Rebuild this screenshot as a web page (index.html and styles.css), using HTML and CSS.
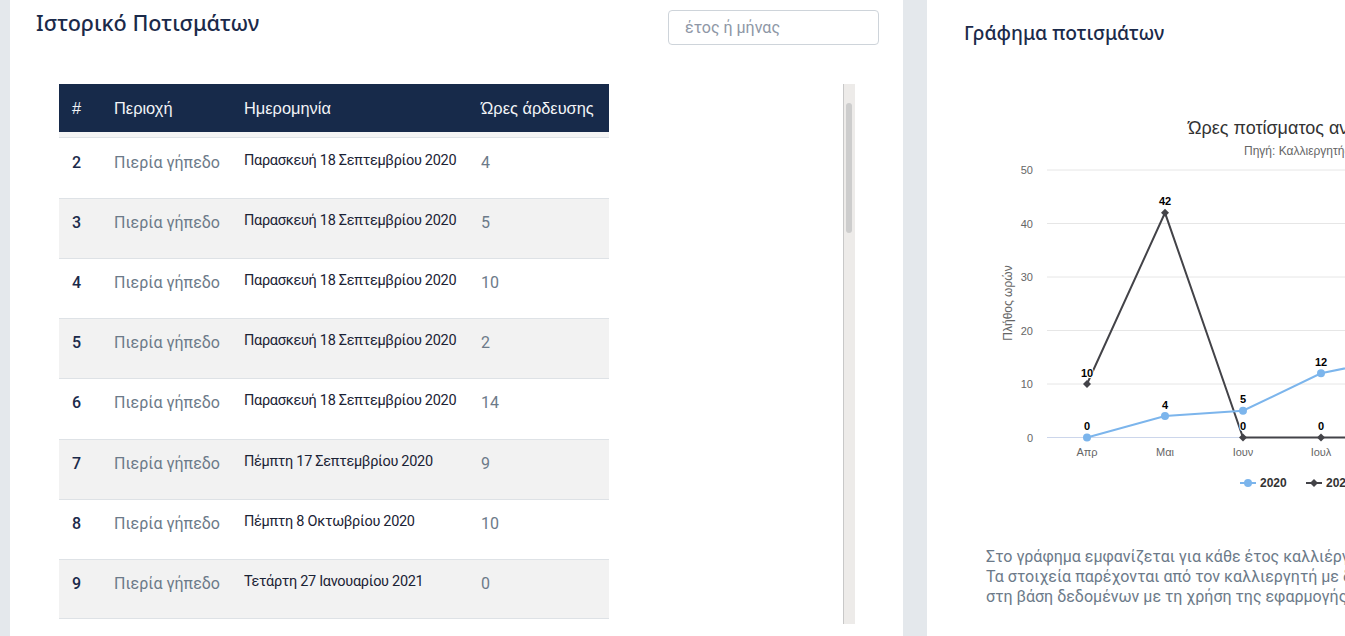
FILE: index.html
```html
<!DOCTYPE html>
<html lang="el">
<head>
    <meta charset="UTF-8">
    <title>Ποτίσματα</title>
    <link rel="stylesheet" href="styles.css">
</head>
<body>
    <div class="page">
        <section class="card card-history">
            <div class="card-head">
                <h2 class="card-title">Ιστορικό Ποτισμάτων</h2>
                <input type="text" class="search" placeholder="έτος ή μήνας">
            </div>
            <div class="table-wrap">
                <div class="table-area">
                    <table class="history">
                        <thead>
                            <tr>
                                <th class="col-num">#</th>
                                <th class="col-area">Περιοχή</th>
                                <th class="col-date">Ημερομηνία</th>
                                <th class="col-hours">Ώρες άρδευσης</th>
                            </tr>
                        </thead>
                        <tbody>
                            <tr>
                                <td class="num">2</td>
                                <td>Πιερία γήπεδο</td>
                                <td class="date">Παρασκευή 18 Σεπτεμβρίου 2020</td>
                                <td>4</td>
                            </tr>
                            <tr>
                                <td class="num">3</td>
                                <td>Πιερία γήπεδο</td>
                                <td class="date">Παρασκευή 18 Σεπτεμβρίου 2020</td>
                                <td>5</td>
                            </tr>
                            <tr>
                                <td class="num">4</td>
                                <td>Πιερία γήπεδο</td>
                                <td class="date">Παρασκευή 18 Σεπτεμβρίου 2020</td>
                                <td>10</td>
                            </tr>
                            <tr>
                                <td class="num">5</td>
                                <td>Πιερία γήπεδο</td>
                                <td class="date">Παρασκευή 18 Σεπτεμβρίου 2020</td>
                                <td>2</td>
                            </tr>
                            <tr>
                                <td class="num">6</td>
                                <td>Πιερία γήπεδο</td>
                                <td class="date">Παρασκευή 18 Σεπτεμβρίου 2020</td>
                                <td>14</td>
                            </tr>
                            <tr>
                                <td class="num">7</td>
                                <td>Πιερία γήπεδο</td>
                                <td class="date">Πέμπτη 17 Σεπτεμβρίου 2020</td>
                                <td>9</td>
                            </tr>
                            <tr>
                                <td class="num">8</td>
                                <td>Πιερία γήπεδο</td>
                                <td class="date">Πέμπτη 8 Οκτωβρίου 2020</td>
                                <td>10</td>
                            </tr>
                            <tr>
                                <td class="num">9</td>
                                <td>Πιερία γήπεδο</td>
                                <td class="date">Τετάρτη 27 Ιανουαρίου 2021</td>
                                <td>0</td>
                            </tr>
                        </tbody>
                    </table>
                </div>
                <div class="scrollbar">
                    <div class="scrollbar-thumb"></div>
                </div>
            </div>
        </section>

        <section class="card card-chart">
            <h3 class="chart-heading">Γράφημα ποτισμάτων</h3>
            <svg class="chart" width="820" height="400" viewBox="0 0 820 400">
                <text class="chart-title" x="224" y="34">Ώρες ποτίσματος ανά μήνα</text>
                <text class="chart-subtitle" x="280" y="55">Πηγή: Καλλιεργητής</text>

                <!-- grid -->
                <g class="grid">
                    <line x1="83" y1="70" x2="551" y2="70"/>
                    <line x1="83" y1="123.5" x2="551" y2="123.5"/>
                    <line x1="83" y1="177" x2="551" y2="177"/>
                    <line x1="83" y1="230.5" x2="551" y2="230.5"/>
                    <line x1="83" y1="284" x2="551" y2="284"/>
                </g>
                <line class="x-axis" x1="83" y1="337.5" x2="551" y2="337.5"/>

                <g class="y-labels">
                    <text x="69" y="74">50</text>
                    <text x="69" y="127.5">40</text>
                    <text x="69" y="181">30</text>
                    <text x="69" y="234.5">20</text>
                    <text x="69" y="288">10</text>
                    <text x="69" y="341.5">0</text>
                </g>
                <text class="y-title" transform="translate(48 203) rotate(-90)">Πλήθος ωρών</text>

                <g class="x-labels">
                    <text x="123" y="356">Απρ</text>
                    <text x="201" y="356">Μαι</text>
                    <text x="279" y="356">Ιουν</text>
                    <text x="357" y="356">Ιουλ</text>
                    <text x="435" y="356">Αυγ</text>
                    <text x="513" y="356">Σεπ</text>
                </g>

                <!-- 2021 -->
                <path class="line-2021" d="M123 284 L201 112.8 L279 337.5 L357 337.5 L435 337.5 L513 337.5"/>
                <g class="marker-2021">
                    <path d="M123 280 L127 284 L123 288 L119 284 Z"/>
                    <path d="M201 108.8 L205 112.8 L201 116.8 L197 112.8 Z"/>
                    <path d="M279 333.5 L283 337.5 L279 341.5 L275 337.5 Z"/>
                    <path d="M357 333.5 L361 337.5 L357 341.5 L353 337.5 Z"/>
                    <path d="M435 333.5 L439 337.5 L435 341.5 L431 337.5 Z"/>
                    <path d="M513 333.5 L517 337.5 L513 341.5 L509 337.5 Z"/>
                </g>

                <!-- 2020 -->
                <path class="line-2020" d="M123 337.5 L201 316.1 L279 310.75 L357 273.3 L435 257.25 L513 241.2"/>
                <g class="marker-2020">
                    <circle cx="123" cy="337.5" r="4"/>
                    <circle cx="201" cy="316.1" r="4"/>
                    <circle cx="279" cy="310.75" r="4"/>
                    <circle cx="357" cy="273.3" r="4"/>
                    <circle cx="435" cy="257.25" r="4"/>
                    <circle cx="513" cy="241.2" r="4"/>
                </g>

                <g class="data-labels">
                    <text x="123" y="276.5">10</text>
                    <text x="201" y="105">42</text>
                    <text x="279" y="329.5">0</text>
                    <text x="357" y="329.5">0</text>
                    <text x="123" y="329.5">0</text>
                    <text x="201" y="308.5">4</text>
                    <text x="279" y="303">5</text>
                    <text x="357" y="265.5">12</text>
                    <text x="435" y="249.5">15</text>
                    <text x="513" y="233.5">18</text>
                </g>

                <!-- legend -->
                <g class="legend">
                    <line class="line-2020" x1="276" y1="383" x2="292" y2="383"/>
                    <circle class="dot-2020" cx="284" cy="383" r="4"/>
                    <text x="296" y="387">2020</text>
                    <line class="line-2021" x1="342" y1="383" x2="358" y2="383"/>
                    <path class="dot-2021" d="M350 379 L354 383 L350 387 L346 383 Z"/>
                    <text x="362" y="387">2021</text>
                </g>
            </svg>
            <p class="chart-note">
                Στο γράφημα εμφανίζεται για κάθε έτος καλλιέργειας το πλήθος ωρών ποτίσματος ανά μήνα.<br>
                Τα στοιχεία παρέχονται από τον καλλιεργητή με δήλωση των ωρών άρδευσης και καταχωρούνται<br>
                στη βάση δεδομένων με τη χρήση της εφαρμογής.
            </p>
        </section>
    </div>
</body>
</html>
```

FILE: styles.css
```css
html,
body {
    margin: 0;
    padding: 0;
    height: 100%;
    overflow: hidden;
}

body {
    font-family: Roboto, "Liberation Sans", sans-serif;
    background-color: #e4e8ec;
    color: #1b2a4a;
}

.page {
    display: grid;
    grid-template-columns: 893px 893px;
    gap: 24px;
    padding-left: 10px;
    height: 636px;
}

.card {
    background-color: #fff;
}

/* Ιστορικό */
.card-head {
    display: flex;
    justify-content: space-between;
    align-items: flex-start;
    padding: 10px 24px 0 26px;
}

.card-title {
    margin: 0;
    font-family: "Noto Sans", sans-serif;
    font-size: 21.6px;
    font-weight: 500;
    line-height: 26px;
    color: #1b2a4a;
}

.search {
    box-sizing: border-box;
    width: 211px;
    height: 35px;
    padding: 0 16px;
    border: 1px solid #ced4da;
    border-radius: 4px;
    font-family: Roboto, sans-serif;
    font-size: 16px;
    color: #495057;
}

.search::placeholder {
    color: #8e97a6;
}

.table-wrap {
    display: flex;
    margin: 39px 48px 0 49px;
    height: 540px;
}

.table-area {
    flex: 1;
    overflow: hidden;
}

.scrollbar {
    width: 11px;
    border-left: 1px solid #c8c8c8;
    background-color: #edebe9;
}

.scrollbar-thumb {
    margin: 19px 3px 0 2px;
    height: 130px;
    border-radius: 3px;
    background-color: #cdcdcd;
}

.history {
    width: 550px;
    border-collapse: separate;
    border-spacing: 0;
    table-layout: fixed;
}

.col-num { width: 42px; }
.col-area { width: 130px; }
.col-date { width: 237px; }
.col-hours { width: 141px; }

.history th {
    box-sizing: border-box;
    height: 48px;
    padding: 0 6px 0 13px;
    background-color: #172a4a;
    color: #f2f4f7;
    font-family: "Liberation Sans", Arial, sans-serif;
    font-size: 16.4px;
    font-weight: 400;
    text-align: left;
    white-space: nowrap;
}

.history td {
    padding: 12px 8px 0 13px;
    border-top: 1px solid #dee2e6;
    vertical-align: top;
    font-size: 16px;
    line-height: 24px;
    color: #6c7a89;
    white-space: nowrap;
}

.history tbody tr:first-child td {
    padding-top: 14px;
    border-top: 5px solid #f4f4f4;
    box-shadow: inset 0 1px 0 #dee2e6;
}

.history tbody tr {
    height: 60.25px;
}

.history tbody tr:first-child {
    height: 65.5px;
}

.history tbody tr:nth-child(even) {
    background-color: #f2f2f2;
}

.history tbody tr:last-child td {
    border-bottom: 1px solid #dee2e6;
}

.history td.num {
    font-weight: 500;
    color: #1b2a4a;
}

.history td.date {
    font-size: 14.5px;
    line-height: 20px;
    letter-spacing: -0.3px;
    color: #1b2335;
}

/* Γράφημα */
.card-chart {
    padding-left: 37px;
}

.chart-heading {
    margin: 21px 0 0;
    font-family: "Noto Sans", sans-serif;
    font-size: 19.3px;
    font-weight: 500;
    line-height: 24px;
    color: #1b2a4a;
}

.chart {
    display: block;
    margin-top: 55px;
    font-family: "Liberation Sans", Arial, sans-serif;
}

.chart-title {
    font-size: 18px;
    fill: #333;
}

.chart-subtitle {
    font-size: 12px;
    fill: #666;
}

.grid line {
    stroke: #e6e6e6;
    stroke-width: 1;
}

.x-axis {
    stroke: #ccd6eb;
    stroke-width: 1;
}

.y-labels text {
    font-size: 11px;
    fill: #666;
    text-anchor: end;
}

.y-title {
    font-size: 12px;
    fill: #666;
    text-anchor: middle;
}

.x-labels text {
    font-size: 11px;
    fill: #666;
    text-anchor: middle;
}

.line-2020 {
    fill: none;
    stroke: #7cb5ec;
    stroke-width: 2;
}

.line-2021 {
    fill: none;
    stroke: #434348;
    stroke-width: 2;
}

.marker-2020 circle,
.dot-2020 {
    fill: #7cb5ec;
}

.marker-2021 path,
.dot-2021 {
    fill: #434348;
}

.data-labels text {
    font-size: 11px;
    font-weight: 700;
    fill: #000;
    stroke: #fff;
    stroke-width: 2px;
    stroke-linejoin: round;
    paint-order: stroke;
    text-anchor: middle;
}

.legend text {
    font-size: 12px;
    font-weight: 700;
    fill: #333;
}

.chart-note {
    margin: 47px 0 0 22px;
    font-size: 16px;
    line-height: 20px;
    color: #6c7a89;
    white-space: nowrap;
}
```
